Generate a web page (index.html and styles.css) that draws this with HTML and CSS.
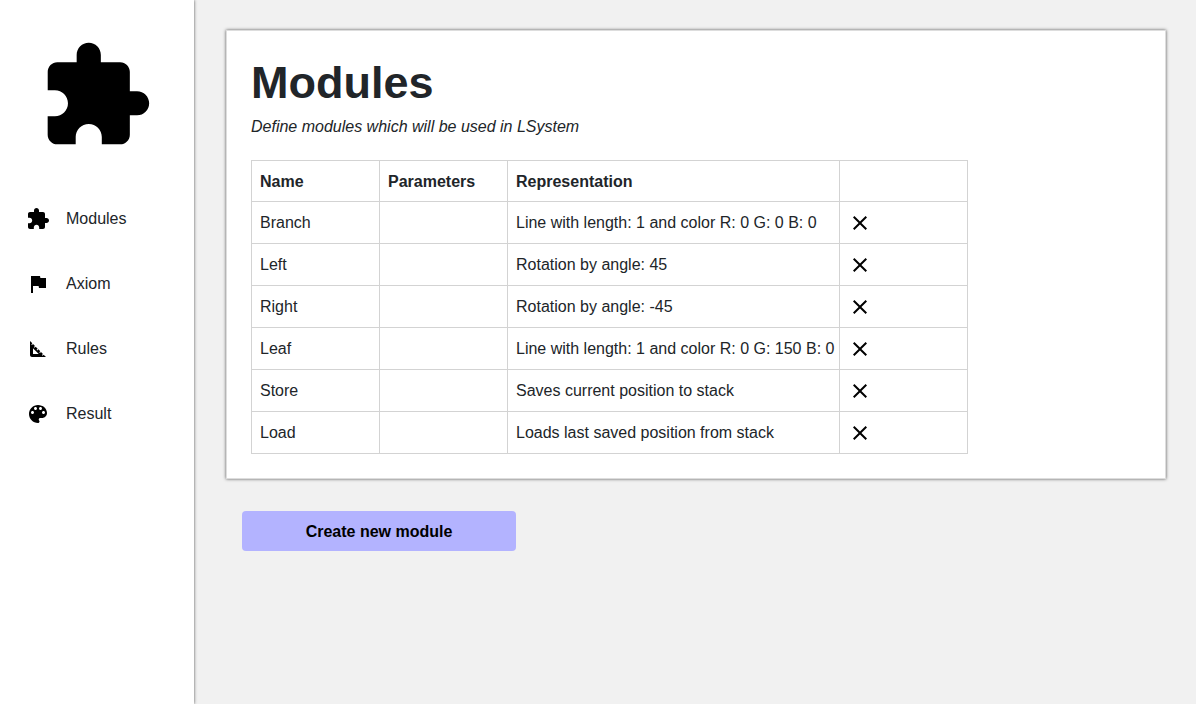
FILE: index.html
```
<!DOCTYPE html>
<html lang="en">
<head>
<meta charset="utf-8">
<meta name="viewport" content="width=device-width, initial-scale=1">
<title>Modules</title>
<link rel="stylesheet" href="styles.css">
</head>
<body>
<svg class="sprite" aria-hidden="true">
  <symbol id="extension" viewBox="0 0 24 24"><path d="M20.5 11H19V7c0-1.1-.9-2-2-2h-4V3.5C13 2.12 11.88 1 10.5 1S8 2.12 8 3.5V5H4c-1.1 0-1.99.9-1.99 2v3.8H3.5c1.49 0 2.7 1.21 2.7 2.7s-1.21 2.7-2.7 2.7H2V20c0 1.1.9 2 2 2h3.8v-1.5c0-1.49 1.21-2.7 2.7-2.7 1.49 0 2.7 1.21 2.7 2.7V22H17c1.1 0 2-.9 2-2v-4h1.5c1.38 0 2.5-1.12 2.5-2.5S21.88 11 20.5 11z"/></symbol>
  <symbol id="flag" viewBox="0 0 24 24"><path d="M14.4 6L14 4H5v17h2v-7h5.6l.4 2h7V6z"/></symbol>
  <symbol id="ruler" viewBox="0 0 24 24"><path d="M17.66 17.66l-1.06 1.06-.71-.71 1.06-1.06-1.94-1.94-1.06 1.06-.71-.71 1.06-1.06-1.94-1.94-1.06 1.06-.71-.71 1.06-1.06L9.7 9.7l-1.06 1.06-.71-.71 1.06-1.06-1.94-1.94-1.06 1.06-.71-.71 1.06-1.06L4 4v14c0 1.1.9 2 2 2h14l-2.34-2.34zM7 17v-5.76L12.76 17H7z"/></symbol>
  <symbol id="palette" viewBox="0 0 24 24"><path d="M12 3c-4.97 0-9 4.03-9 9s4.03 9 9 9c.83 0 1.5-.67 1.5-1.5 0-.39-.15-.74-.39-1.01-.23-.26-.38-.61-.38-.99 0-.83.67-1.5 1.5-1.5H16c2.76 0 5-2.24 5-5 0-4.42-4.03-8-9-8zm-5.5 9c-.83 0-1.5-.67-1.5-1.5S5.67 9 6.5 9 8 9.67 8 10.5 7.33 12 6.5 12zm3-4C8.67 8 8 7.33 8 6.5S8.67 5 9.5 5s1.5.67 1.5 1.5S10.33 8 9.5 8zm5 0c-.83 0-1.5-.67-1.5-1.5S13.67 5 14.5 5s1.5.67 1.5 1.5S15.33 8 14.5 8zm3 4c-.83 0-1.5-.67-1.5-1.5S16.67 9 17.5 9s1.5.67 1.5 1.5-.67 1.5-1.5 1.5z"/></symbol>
  <symbol id="close" viewBox="0 0 24 24"><path d="M19 6.41L17.59 5 12 10.59 6.41 5 5 6.41 10.59 12 5 17.59 6.41 19 12 13.41 17.59 19 19 17.59 13.41 12z"/></symbol>
</svg>
<div class="layout">
  <aside class="sidebar">
    <svg class="logo" aria-hidden="true"><use href="#extension"/></svg>
    <nav class="nav">
      <a class="nav-link" href="#modules"><svg class="icon" aria-hidden="true"><use href="#extension"/></svg>Modules</a>
      <a class="nav-link" href="#axiom"><svg class="icon" aria-hidden="true"><use href="#flag"/></svg>Axiom</a>
      <a class="nav-link" href="#rules"><svg class="icon" aria-hidden="true"><use href="#ruler"/></svg>Rules</a>
      <a class="nav-link" href="#result"><svg class="icon" aria-hidden="true"><use href="#palette"/></svg>Result</a>
    </nav>
  </aside>
  <main class="main">
    <section class="card">
      <h1 class="title">Modules</h1>
      <p class="subtitle">Define modules which will be used in LSystem</p>
      <table class="modules">
        <thead>
          <tr><th scope="col">Name</th><th scope="col">Parameters</th><th scope="col">Representation</th><td></td></tr>
        </thead>
        <tbody>
          <tr><td>Branch</td><td></td><td>Line with length: 1 and color R: 0 G: 0 B: 0</td><td><button class="remove" type="button" aria-label="Remove Branch"><svg class="icon" aria-hidden="true"><use href="#close"/></svg></button></td></tr>
          <tr><td>Left</td><td></td><td>Rotation by angle: 45</td><td><button class="remove" type="button" aria-label="Remove Left"><svg class="icon" aria-hidden="true"><use href="#close"/></svg></button></td></tr>
          <tr><td>Right</td><td></td><td>Rotation by angle: -45</td><td><button class="remove" type="button" aria-label="Remove Right"><svg class="icon" aria-hidden="true"><use href="#close"/></svg></button></td></tr>
          <tr><td>Leaf</td><td></td><td>Line with length: 1 and color R: 0 G: 150 B: 0</td><td><button class="remove" type="button" aria-label="Remove Leaf"><svg class="icon" aria-hidden="true"><use href="#close"/></svg></button></td></tr>
          <tr><td>Store</td><td></td><td>Saves current position to stack</td><td><button class="remove" type="button" aria-label="Remove Store"><svg class="icon" aria-hidden="true"><use href="#close"/></svg></button></td></tr>
          <tr><td>Load</td><td></td><td>Loads last saved position from stack</td><td><button class="remove" type="button" aria-label="Remove Load"><svg class="icon" aria-hidden="true"><use href="#close"/></svg></button></td></tr>
        </tbody>
      </table>
    </section>
    <button class="create" type="button">Create new module</button>
  </main>
</div>
</body>
</html>
```
FILE: styles.css
```
*,
*::before,
*::after {
  box-sizing: border-box;
}

body {
  margin: 0;
  background: #f1f1f1;
  color: #212529;
  font: 16px/24px "Liberation Sans", Arial, sans-serif;
}

.sprite {
  display: none;
}

.layout {
  display: flex;
  min-height: 100vh;
}

.sidebar {
  flex: 0 0 194px;
  padding-top: 38px;
  background: #fff;
  box-shadow: 0 0 3px #555;
}

.logo {
  display: block;
  width: 116px;
  height: 116px;
  margin-left: 38px;
}

.nav {
  display: flex;
  flex-direction: column;
  margin-top: 32px;
}

.nav-link {
  display: flex;
  align-items: center;
  gap: 16px;
  height: 65px;
  padding-left: 26px;
  color: inherit;
  text-decoration: none;
}

.icon {
  display: block;
  width: 24px;
  height: 24px;
  fill: #000;
}

.main {
  flex: 1;
  min-width: 0;
  padding: 30px 30px 30px 32px;
}

.card {
  padding: 25px 24px 24px;
  border: 1px solid #ddd;
  background: #fff;
  box-shadow: 0 0 3px #555;
}

.title {
  margin: 0 0 5px;
  font-size: 45px;
  line-height: 54px;
}

.subtitle {
  margin: 0 0 21px;
  font-style: italic;
}

.modules {
  border-collapse: collapse;
}

.modules th,
.modules td {
  min-width: 128px;
  padding: 9px 8px 7px;
  border: 1px solid #d3d3d3;
  text-align: left;
  vertical-align: top;
}

.modules th:nth-child(3),
.modules td:nth-child(3) {
  padding-right: 5px;
}

.remove {
  display: block;
  padding: 0 0 1px;
  border: 0;
  background: none;
  cursor: pointer;
}

.create {
  display: block;
  width: 274px;
  height: 40px;
  margin: 32px 16px 0;
  padding: 1px 0 0;
  border: 0;
  border-radius: 4px;
  background: #b3b3ff;
  color: #000;
  font: bold 16px/24px "Liberation Sans", Arial, sans-serif;
  cursor: pointer;
}
```
